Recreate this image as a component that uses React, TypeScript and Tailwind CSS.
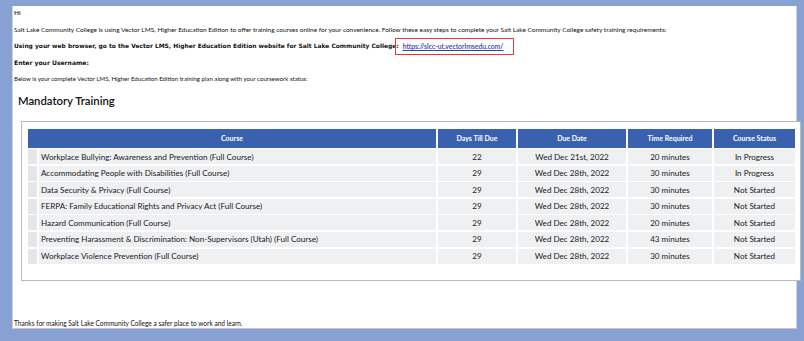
const courses = [
  { name: "Workplace Bullying: Awareness and Prevention (Full Course)", days: 22, due: "Wed Dec 21st, 2022", time: "20 minutes", status: "In Progress" },
  { name: "Accommodating People with Disabilities (Full Course)", days: 29, due: "Wed Dec 28th, 2022", time: "30 minutes", status: "In Progress" },
  { name: "Data Security & Privacy (Full Course)", days: 29, due: "Wed Dec 28th, 2022", time: "30 minutes", status: "Not Started" },
  { name: "FERPA: Family Educational Rights and Privacy Act (Full Course)", days: 29, due: "Wed Dec 28th, 2022", time: "30 minutes", status: "Not Started" },
  { name: "Hazard Communication (Full Course)", days: 29, due: "Wed Dec 28th, 2022", time: "20 minutes", status: "Not Started" },
  { name: "Preventing Harassment & Discrimination: Non-Supervisors (Utah) (Full Course)", days: 29, due: "Wed Dec 28th, 2022", time: "43 minutes", status: "Not Started" },
  { name: "Workplace Violence Prevention (Full Course)", days: 29, due: "Wed Dec 28th, 2022", time: "30 minutes", status: "Not Started" },
];

const headers = ["Days Till Due", "Due Date", "Time Required", "Course Status"];

export default function App() {
  return (
    <div className="h-[341px] w-[804px] overflow-hidden bg-[#87a1d3] pl-[12px] pt-[6px] font-['Lato','Liberation_Sans',sans-serif] text-[#111]">
      <div className="flex h-[323px] w-[785px] flex-col border-x border-b border-x-[#cfd3da] border-b-[#c4c4c4] bg-white pl-[1px]">
        <p className="mt-[2px] text-[6.5px] leading-[10px] font-semibold">Hi</p>
        <p className="mt-[7px] text-[6.5px] leading-[10px]">
          Salt Lake Community College is using Vector LMS, Higher Education Edition to offer training courses online for your convenience. Follow these easy steps to complete your Salt Lake Community College safety training requirements:
        </p>
        <div className="mt-[6px] flex h-[10px] items-center">
          <span className="font-['DejaVu_Sans',sans-serif] text-[5.95px] font-bold">
            Using your web browser, go to the Vector LMS, Higher Education Edition website for Salt Lake Community College:
          </span>
          <span className="-ml-[4px] flex h-[17px] items-center border border-[#e0393e] pl-[7px] pr-[10px]">
            <a href="#" className="text-[6.8px] font-semibold text-[#3340a8] underline">https://slcc-ut.vectorlmsedu.com/</a>
          </span>
        </div>
        <p className="mt-[6.5px] font-['DejaVu_Sans',sans-serif] text-[6.05px] leading-[10px] font-bold">Enter your Username:</p>
        <p className="mt-[6px] text-[6.1px] leading-[10px]">
          Below is your complete Vector LMS, Higher Education Edition training plan along with your coursework status:
        </p>
        <h2 className="mt-[9px] pl-[4px] text-[11.3px] leading-[16px] font-semibold text-[#111]">Mandatory Training</h2>

        <div className="ml-[7px] mt-[12px] h-[160px] w-[780px] shrink-0 border border-[#b9b9b9] bg-white pl-[6px] pt-[7px]">
          <div className="grid w-[767px] grid-cols-[9px_397px_78px_108px_84px_81px] gap-x-[2px] gap-y-[1.6px] bg-white">
            <div className="col-span-2 flex h-[19px] items-center justify-center bg-[#3a61ad] text-[7px] font-bold text-white">Course</div>
            {headers.map((h) => (
              <div key={h} className="flex h-[19px] items-center justify-center bg-[#3a61ad] text-[7px] font-bold text-white">{h}</div>
            ))}
            {courses.map((c) => (
              <>
                <div key={c.name + "-n"} className="h-[15px] bg-[#e4e6ea]" />
                <div key={c.name} className="flex h-[15px] items-center bg-[#eef0f2] pl-[2px] text-[8.1px] text-[#1a1a1a]">{c.name}</div>
                <div key={c.name + "-d"} className="flex h-[15px] items-center justify-center bg-[#eef0f2] text-[8.1px] text-[#1a1a1a]">{c.days}</div>
                <div key={c.name + "-due"} className="flex h-[15px] items-center justify-center bg-[#eef0f2] text-[8.1px] text-[#1a1a1a]">{c.due}</div>
                <div key={c.name + "-t"} className="flex h-[15px] items-center justify-center bg-[#eef0f2] text-[8.1px] text-[#1a1a1a]">{c.time}</div>
                <div key={c.name + "-s"} className="flex h-[15px] items-center justify-center bg-[#eef0f2] text-[8.1px] text-[#1a1a1a]">{c.status}</div>
              </>
            ))}
          </div>
        </div>

        <p className="mt-auto mb-[-2px] text-[6.55px] leading-[12px]">
          Thanks for making Salt Lake Community College a safer place to work and learn.
        </p>
      </div>
    </div>
  );
}
